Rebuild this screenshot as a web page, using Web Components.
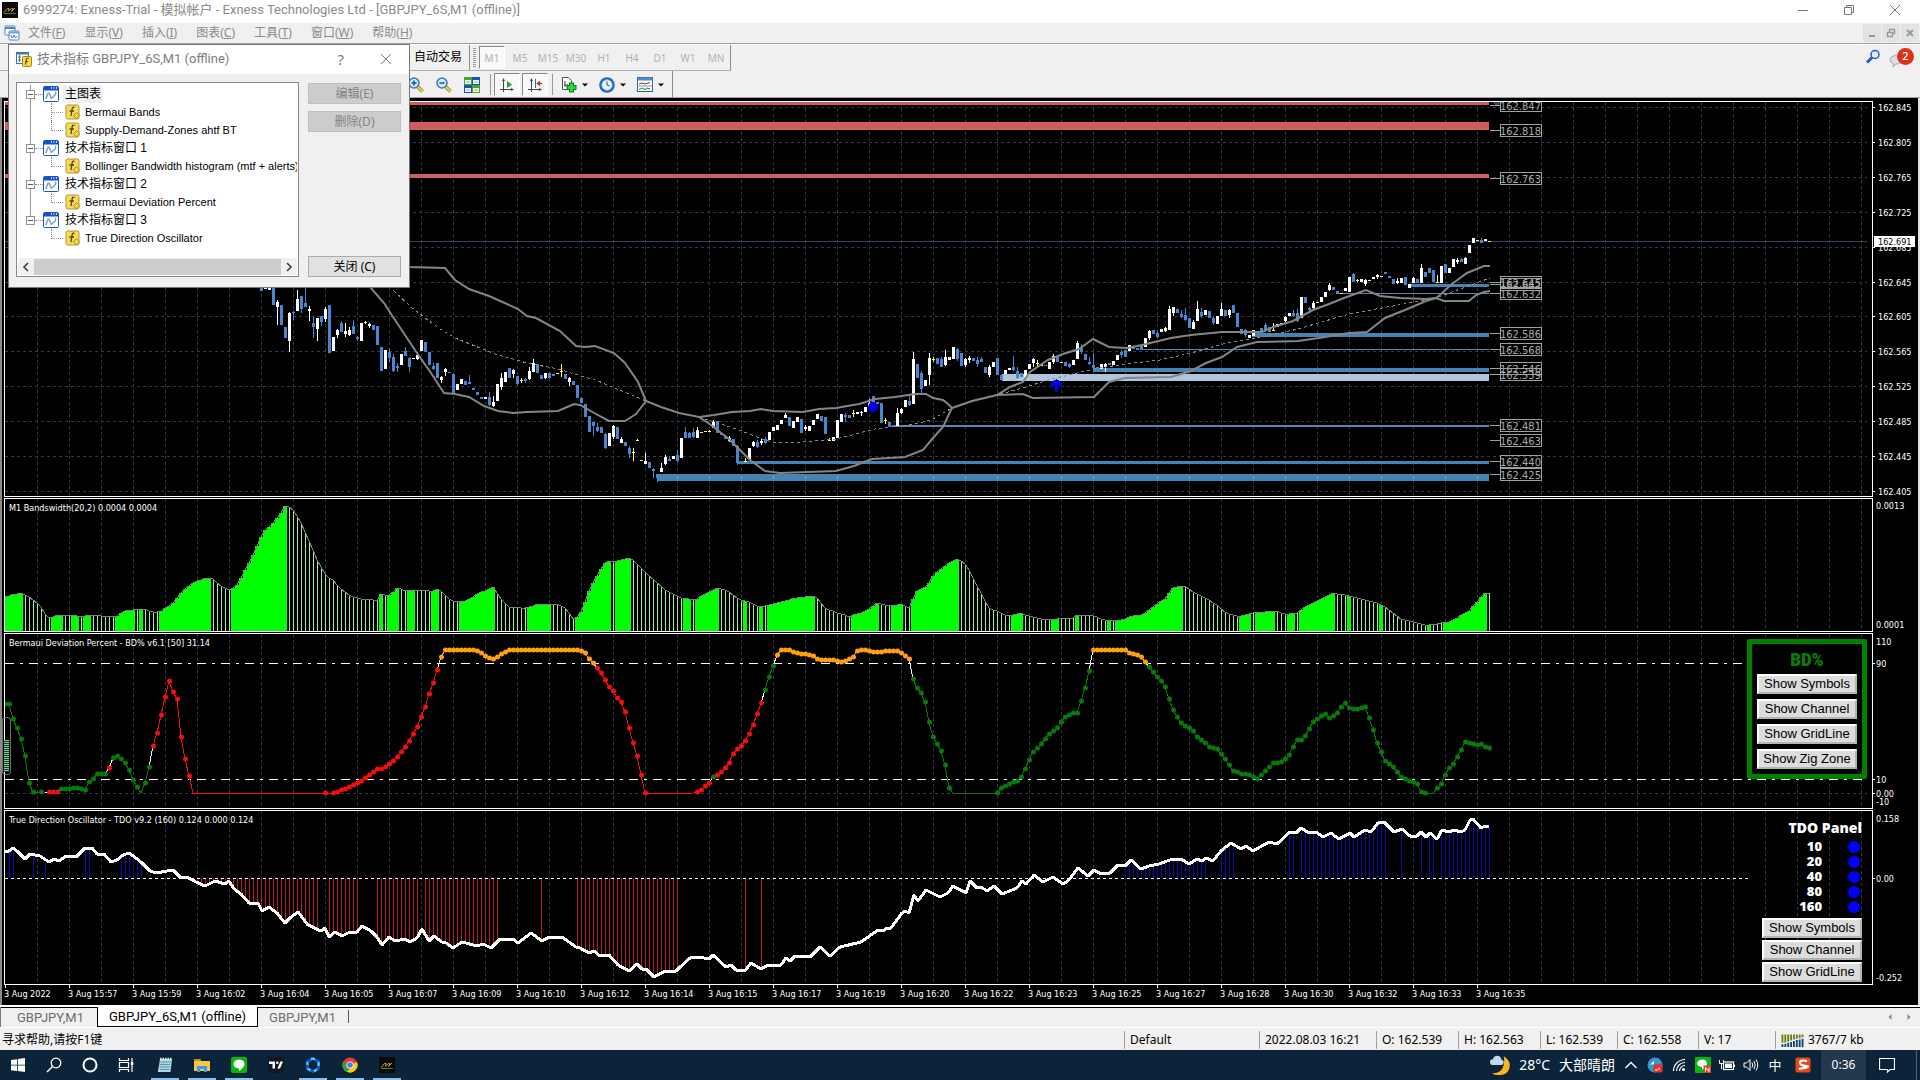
<!DOCTYPE html>
<html lang="zh-CN">
<head>
<meta charset="utf-8">
<title>6999274: Exness-Trial</title>
<style>
html,body{margin:0;height:100%;overflow:hidden;background:#f0f0f0}
body{font:12px/16px "Noto Sans","Noto Sans CJK SC",sans-serif;color:#000}
</style>
</head>
<body>
<mt-terminal></mt-terminal>
<script>
function define(name, css, html, ready) {
  const tpl = document.createElement('template');
  tpl.innerHTML = `<style>:host{box-sizing:border-box;display:block}*{box-sizing:border-box}
  button{font:inherit;color:inherit;background:none;border:0;padding:0;margin:0;white-space:nowrap}${css}</style>${html}`;
  customElements.define(name, class extends HTMLElement {
    connectedCallback() {
      if (this.shadowRoot) return;
      this.attachShadow({ mode: 'open' }).appendChild(tpl.content.cloneNode(true));
      if (ready) ready(this, this.shadowRoot);
    }
  });
}

/* ---------- icons ---------- */
const mtLogo = '<rect width="16" height="16" fill="#0b0b0b"/><path d="M2 10.500 5.500 6.500h1.500L6.500 9l3-2.500h1.500L9.500 9.500l3.500-3.500" fill="none" stroke="#c99c2c" stroke-width="1"/><path d="M2 11.500h12" stroke="#4c7b33"/>';
const lens = '<path d="m10 10 4.500 4.500" stroke="#9a7416" stroke-width="3.500"/><path d="m10 10 4.500 4.500" stroke="#f0d14a" stroke-width="2"/><circle cx="6" cy="6" r="5" fill="#c9e8fb" stroke="#3b78b5" stroke-width="1.500"/><path d="M3.500 6h5" stroke="#1d4f91" stroke-width="1.500"/>';
const arrows = '<path d="M4.500 2v13M1 12.500h13" stroke="#444"/><path d="M4.500 1 3 4h3zM15 12.500 12 11v3z" fill="#444"/>';
const ICONS = {
  mt: mtLogo,
  charts: '<rect x="1" y="1" width="10" height="9" rx="1" fill="#fff" stroke="#4a8ac4"/><path d="M1 3h10" stroke="#4a8ac4" stroke-width="2"/><rect x="5" y="6" width="10" height="9" rx="1" fill="#fff" stroke="#4a8ac4"/><path d="M5 7.500h10" stroke="#6ba4d8" stroke-width="2"/><path d="m6.500 10 2 3 1.500-3 1.500 3 2-2" fill="none" stroke="#3b6fb0"/>',
  dlg: '<rect x=".5" y="1.500" width="12" height="11" fill="#fff" stroke="#3c78a8"/><path d="M.5 2.500h12" stroke="#3c78a8" stroke-width="2"/><path d="M3.500 4v7M2 6h3M2 9h3" stroke="#3c78a8"/><rect x="6.500" y="5.500" width="9" height="10" rx="1" fill="#f6d64a" stroke="#a98512"/><path d="M12.500 7.500q-2-1-2.200 1.500L9.500 13.500M9 10.500h3" fill="none" stroke="#6b4a00" stroke-width="1.200"/>',
  win: '<rect x=".5" y=".5" width="15" height="15" rx="1" fill="#fff" stroke="#1a56c4"/><path d="M1 2.500h14" stroke="#1550c8" stroke-width="4"/><path d="M8 2h1M10.500 2h1M13 2h1" stroke="#fff" stroke-width="1.500"/><path d="M3 13q2-8 3.500-5t1.500 4 3-2 1-4" fill="none" stroke="#7c9cd8" stroke-width="1.500"/>',
  fx: '<rect x="1" y="1" width="13" height="14" rx="1.500" fill="#f3d95e" stroke="#b8962a"/><path d="M9.500 3.500Q7.300 2.500 7 5.500L6 12M4.500 7h4.500" fill="none" stroke="#5d4300" stroke-width="1.300"/><path d="m11.500 8.500 3 3.200-3 3.200-3-3.200z" fill="#f8dc4c" stroke="#a98512"/>',
  zoomin: lens + '<path d="M6 3.500v5" stroke="#1d4f91" stroke-width="1.500"/>',
  zoomout: lens,
  tiles: '<path d="M0 0h8v8H0z" fill="#4aa324"/><path d="M8 0h8v8H8z" fill="#1c50b8"/><path d="M0 8h8v8H0z" fill="#1c50b8"/><path d="M8 8h8v8H8z" fill="#4aa324"/><path d="M1 3h6v4H1zM9 3h6v4H9zM1 11h6v4H1zM9 11h6v4H9z" fill="#eef4ea"/><path d="M2 5h4M10 5h4M2 13h4M10 13h4" stroke="#9ab0c4"/>',
  scroll: arrows + '<path d="m8 4 5 3.500-5 3.500z" fill="#1fa32b"/>',
  shift: arrows + '<path d="M8.500 2v9" stroke="#2b6cae"/><path d="M15 6.500h-4m2-2-2.500 2 2.500 2" fill="none" stroke="#b8341d" stroke-width="1.500"/>',
  newchart: '<path d="M1.500 .5h6l3 3v9h-9z" fill="#fff" stroke="#555"/><path d="M4 4v6M3 8h4" stroke="#444"/><path d="M10.500 5.500v10M5.500 10.500h10" stroke="#0c7d16" stroke-width="5"/><path d="M10.500 6.500v8M6.500 10.500h8" stroke="#2cd636" stroke-width="3"/>',
  clock: '<circle cx="8" cy="8" r="7.800" fill="#1f69bb"/><circle cx="8" cy="8" r="5.200" fill="#edf6fd" stroke="#8fc2ee"/><path d="M8 4.500V8l2.500 1" fill="none" stroke="#444"/>',
  template: '<rect x=".5" y=".5" width="15" height="14" fill="#fff" stroke="#33679a"/><path d="M.5 2h15" stroke="#4b8cc6" stroke-width="3"/><path d="M.5 9h15" stroke="#7797b5"/><path d="m2 7 3-1 3 1 5-1.500" fill="none" stroke="#9b2222"/><path d="m2 12.500 3-1.500 3 1.500 2-1.500 3 1" fill="none" stroke="#1d8a2a"/>',
  find: '<circle cx="10" cy="5.500" r="4" fill="#e3eeff" stroke="#2c56c9" stroke-width="1.500"/><path d="m7 8.500-5 5" stroke="#2c56c9" stroke-width="3"/>',
  bubble: '<path d="M7 3q6 0 6 4.500T7 12l-3 3 .5-3.500Q1 10.500 1 7.500T7 3z" fill="#dedee4" stroke="#a8a8b0"/>',
  start: '<path d="M1 3 7 2.200V7.700H1zM7.800 2.100 15 1v6.700H7.800zM1 8.500h6V14l-6-.8zM7.800 8.500H15V15l-7.200-1z" fill="#fff"/>',
  search: '<circle cx="10" cy="6" r="4.800" fill="none" stroke="#fff" stroke-width="1.300"/><path d="M6.500 9.500 1 15" stroke="#fff" stroke-width="1.500"/>',
  ring: '<circle cx="8" cy="8" r="6.500" fill="none" stroke="#fff" stroke-width="2"/>',
  tasks: '<path d="M1.500 1v2.500h9V1M1.500 15v-2.500h9V15M1.500 5.500h9v5h-9zM14 1v14" fill="none" stroke="#fff" stroke-width="1.200"/><path d="M12.800 5h2.500v3h-2.500z" fill="#fff"/>',
  notepad: '<path d="M3 2h12l-1.500 13H1z" fill="#a9d6e2"/><path d="M3.500 5h10M3 7.500h10M3 10h10M2.500 12.500h10" stroke="#5b9aab"/><path d="M3 2h12" stroke="#e7eef0" stroke-width="2.500" stroke-dasharray="1.500 1"/><path d="m1 15 1-4 1 4z" fill="#e8dcae"/>',
  folder: '<path d="M0 2h6l1 2h9v10H0z" fill="#f5c64a"/><path d="M0 2h6l1 2H0z" fill="#c98f16"/><path d="M3 15V9h10v6h-3v-3H6v3z" fill="#3b9be0"/>',
  line: '<rect width="16" height="16" rx="2" fill="#05b80b"/><path d="M8 2.500q5.500.3 5.500 4.700Q13.500 10 8 14v-2.600Q2.500 11 2.500 7.200 2.500 2.800 8 2.500z" fill="#fff"/>',
  tv: '<rect width="16" height="16" fill="#131722"/><path d="M1 4.500h6v7H4.500V7H1zM12.500 4.500H15l-3 7H9.300z" fill="#fff"/><circle cx="9.300" cy="5.800" r="1.300" fill="#fff"/>',
  star: '<path d="m8 1.500 5.600 3.200v6.600L8 14.500l-5.600-3.200V4.700z" fill="none" stroke="#1d50c8" stroke-width="3"/><path d="M6 1.800 10 1.800M13.600 5v4M12 12.500 9 14.300M5.500 13.500 2.500 11.500M2.400 8V5" stroke="#39d4f0" stroke-width="2.200"/>',
  chrome: '<circle cx="8" cy="8" r="7.500" fill="#e23f33"/><path d="M1.500 4.200 6 12l-1 3A7.500 7.500 0 0 1 1.500 4.200z" fill="#2ba24c"/><path d="M4.500 14.600 8.500 8l6.500-3A7.500 7.500 0 0 1 4.500 14.600z" fill="#fbc816"/><path d="M1.500 4.200 5 11l3 1-3.500 2.700A7.500 7.500 0 0 1 1.500 4.200z" fill="#2ba24c"/><circle cx="8" cy="8" r="3.600" fill="#fff"/><circle cx="8" cy="8" r="2.800" fill="#3f7fe8"/>',
  moon: '<path d="M11 1q6 3.500 4.500 9.500T6 16q-3 0-4-1.500 6 0 8-4T11 1z" fill="#fbb41d"/><path d="M3 8Q0 8 0 5.700T2.300 3.500Q3 .5 5.800.5T9 3.500q2 .4 2 2.300T9 8z" fill="#c3d7f0"/>',
  up: '<path d="m2.500 11 5.500-5.500 5.500 5.500" fill="none" stroke="#fff" stroke-width="1.300"/>',
  cloud: '<circle cx="8" cy="8" r="7.500" fill="#2e9bd6"/><path d="M3 7.500 7 4v3h3z" fill="#fff"/><rect x="6.500" y="7" width="9" height="8.500" rx="1.500" fill="#e2332d"/><path d="M8 13h2.500M12 10.500v2.500" stroke="#fff"/>',
  wifi: '<path d="M2.500 14A11.500 11.500 0 0 1 14 2.500M5.500 14A8.500 8.500 0 0 1 14 5.500M8.500 14A5.500 5.500 0 0 1 14 8.500" fill="none" stroke="#fff" stroke-width="1.200"/><circle cx="12.500" cy="12.500" r="1.500" fill="#fff"/>',
  battery: '<rect x="4.500" y="5" width="10" height="7.500" fill="none" stroke="#fff" stroke-width="1.200"/><path d="M6 6.500h7V11H6zM14.500 7.500H16V10h-1.500z" fill="#fff"/><path d="M2.500 12V7M.5 3v3.500h4V3" fill="none" stroke="#fff"/>',
  speaker: '<path d="M1 6h2.500L7 2.500v11L3.500 10H1z" fill="none" stroke="#fff"/><path d="M9 5.500q1.500 2.500 0 5M11 4q2.500 4 0 8M13 2.500q3.500 5.500 0 11" fill="none" stroke="#fff"/>',
  linen: '<rect width="16" height="16" rx="1" fill="#05b80b"/><path d="M7 2.500q5 .3 5 4.200T7 12.500v-2.600Q2 9.500 2 6.500t5-4z" fill="#fff"/><rect x="8.500" y="8.500" width="7.500" height="7.500" fill="#e23b30"/><path d="M10.500 14.500v-4l3.500 4v-4" fill="none" stroke="#fff"/>',
  sogou: '<rect x=".5" y=".5" width="15" height="15" rx="2" fill="#e8481c"/><path d="M12 4Q5 2.500 5 5.500T11 9 4 12" fill="none" stroke="#fff" stroke-width="2.200"/>',
  note: '<path d="M.5 1.500h15v11H11L8.500 15v-2.500H.5z" fill="none" stroke="#fff" stroke-width="1.200"/>',
  net: '<path d="M1 1.500v9M3 1.500v8.500M5 1.500v7.500M7 1.500v6.500M9 1.500v5.500M11 1.500v4.500M13 1.500v4M15 1.500v3" stroke="#6c7f10" stroke-width="1.300"/><path d="M1 12v3M3 11.500v3.500M5 10.500v4.500M7 9.500v5.500M9 8.500v6.500M11 7.500v7.500M13 7v8M15 6v9" stroke="#0d4a72" stroke-width="1.300"/>',
  min: '<path d="M3 8.500h10" stroke="#777"/>',
  restore: '<path d="M3.500 5.500h7v7h-7zM5.500 5.500v-2h7v7h-2" fill="none" stroke="#777"/>',
  close: '<path d="m3 3 10 10M13 3 3 13" stroke="#777"/>',
  mdimin: '<path d="M5 11h6" stroke="#8b9bad" stroke-width="2"/>',
  mdirestore: '<path d="M4.500 7.500h5v4h-5zM6.500 7V4.500h5v4H10" fill="none" stroke="#8b9bad" stroke-width="1.300"/>',
  mdiclose: '<path d="m5 5 6 6M11 5l-6 6" stroke="#8b9bad" stroke-width="2"/>',
  caret: '<path d="M5 6.500h6L8 9.500z" fill="#000"/>',
  left: '<path d="M9.500 5v6L6.500 8z" fill="#888"/>',
  right: '<path d="M6.500 5v6l3-3z" fill="#888"/>',
  chevl: '<path d="M10 4 6 8l4 4" fill="none" stroke="#444" stroke-width="1.700"/>',
  chevr: '<path d="m6 4 4 4-4 4" fill="none" stroke="#444" stroke-width="1.700"/>'
};
define('ui-icon', ':host{width:var(--size,16px);height:var(--size,16px);flex:none}svg{display:block;width:100%;height:100%}', '<svg viewBox="0 0 16 16" aria-hidden="true"></svg>',
  (el, root) => {
    const svg = root.querySelector('svg'), name = el.getAttribute('name');
    if (name === 'net') svg.setAttribute('preserveAspectRatio', 'none');
    svg.innerHTML = ICONS[name];
  });

/* ---------- title and menu ---------- */
const WINDOW_FONT = '13px/16px Roboto,"Noto Sans CJK SC",sans-serif';
define('title-bar', `
:host{display:flex;align-items:center;height:23px;background:#fff;color:#8b8b8b;padding:0 17px 3px 2px;gap:5px}
h1{flex:1;font:${WINDOW_FONT};margin:0;white-space:nowrap}
nav{display:flex;gap:30px;align-items:center}`,
`<ui-icon name="mt"></ui-icon><h1>6999274: Exness-Trial - 模拟帐户 - Exness Technologies Ltd - [GBPJPY_6S,M1 (offline)]</h1>
<nav><button aria-label="Minimize"><ui-icon name="min"></ui-icon></button><button aria-label="Restore"><ui-icon name="restore"></ui-icon></button><button aria-label="Close"><ui-icon name="close"></ui-icon></button></nav>`);

define('menu-bar', `
:host{display:flex;align-items:center;height:21px;color:#8b8b8b;padding:0 1px 0 4px;border-bottom:1px solid #a0a0a0;background:#f0f0f0}
nav{display:flex;gap:19px;flex:1;padding-left:8px}
div{display:flex;gap:1px}div button{width:18px;height:18px;background:#e3e3e3;padding:1px}`,
`<ui-icon name="charts"></ui-icon><nav><button>文件(<u>F</u>)</button><button>显示(<u>V</u>)</button><button>插入(<u>I</u>)</button><button>图表(<u>C</u>)</button><button>工具(<u>T</u>)</button><button>窗口(<u>W</u>)</button><button>帮助(<u>H</u>)</button></nav>
<div><button aria-label="Minimize chart"><ui-icon name="mdimin"></ui-icon></button><button aria-label="Restore chart"><ui-icon name="mdirestore"></ui-icon></button><button aria-label="Close chart"><ui-icon name="mdiclose"></ui-icon></button></div>`);

/* ---------- toolbars ---------- */
define('tool-bars', `
:host{display:flex;justify-content:space-between;height:54px;background:#f0f0f0;border-bottom:1px solid #a0a0a0;border-top:1px solid #fff}
.bars{display:flex;flex-direction:column;align-items:flex-start}
.bar{display:flex;align-items:center;height:26px;padding:0 0 0 414px;border-right:1px solid #8c8c8c;border-bottom:1px solid #b0b0b0}
.auto{width:56px;height:25px;border-right:1px solid #8c8c8c;text-align:left;padding-bottom:2px}
.grip{width:3px;height:20px;margin:0 3px;background:repeating-linear-gradient(#999 0 1px,#f0f0f0 1px 2px)}
.tf{width:28px;color:#b0b0b0;font-size:10px;text-align:center}
.on{width:26px;height:23px;background:#f9f9f9;border:1px solid #fff;border-top-color:#888;border-left-color:#888;color:#b0b0b0}
.tf.on{margin-right:1px}
.two{padding:1px 3px 0 408px;border-bottom:0}
.zoom{display:flex;gap:12px;margin-right:10px}
.toggles{display:flex;gap:2px;margin:0 4px 0 3px}
.toggles .on{padding:3px 4px}
.sep{width:1px;height:21px;background:#999}
.menus{display:flex;gap:6px;margin-left:8px}
.drop{display:flex;align-items:center}
.right{display:flex;gap:8px;padding:4px 13px 0 0;align-items:flex-start}
.msg{position:relative;width:18px;padding-top:3px}
b{position:absolute;left:8px;top:-1px;width:17px;height:17px;border-radius:9px;background:#dc3318;color:#fff;font:600 11px/16px "Open Sans",sans-serif;text-align:center}`,
`<div class="bars"><div class="bar"><button class="auto">自动交易</button><span class="grip"></span><button class="tf on">M1</button><button class="tf">M5</button><button class="tf">M15</button><button class="tf">M30</button><button class="tf">H1</button><button class="tf">H4</button><button class="tf">D1</button><button class="tf">W1</button><button class="tf">MN</button></div>
<div class="bar two"><div class="zoom"><button aria-label="Zoom in"><ui-icon name="zoomin"></ui-icon></button><button aria-label="Zoom out"><ui-icon name="zoomout"></ui-icon></button><button aria-label="Tile"><ui-icon name="tiles"></ui-icon></button></div><span class="sep"></span><div class="toggles"><button class="on" aria-label="Auto scroll"><ui-icon name="scroll"></ui-icon></button><button class="on" aria-label="Shift"><ui-icon name="shift"></ui-icon></button></div><span class="sep"></span><div class="menus"><button class="drop" aria-label="Indicators"><ui-icon name="newchart"></ui-icon><ui-icon name="caret"></ui-icon></button><button class="drop" aria-label="Periods"><ui-icon name="clock"></ui-icon><ui-icon name="caret"></ui-icon></button><button class="drop" aria-label="Templates"><ui-icon name="template"></ui-icon><ui-icon name="caret"></ui-icon></button></div></div></div>
<div class="right"><button aria-label="Search"><ui-icon name="find"></ui-icon></button><button class="msg"><ui-icon name="bubble"></ui-icon><b>2</b></button></div>`);

/* ---------- indicator dialog ---------- */
define('tree-row', `
:host{display:flex;align-items:center;height:18px;padding-left:8px;gap:6px;white-space:nowrap;background:linear-gradient(#999,#999) 12px 0/1px 100% no-repeat}
:host([last]){background-size:1px 9px}
:host([end]){background:none}
span{flex:none}
.box{width:9px;height:9px;border:1px solid #919191;background:linear-gradient(#3a56a8,#3a56a8) 50% 50%/5px 1px no-repeat #fff}
.dots{width:8px;border-top:1px dotted #888;margin-left:-6px}
.elbow{width:13px;height:18px;margin-left:25px;border-left:1px dotted #888;background:linear-gradient(90deg,#999 50%,#fff 50%) 0 9px/2px 1px repeat-x}
.elbow.cut{height:10px;align-self:flex-start}
.win{margin-left:-6px}
.fx{margin-left:-5px;margin-right:-2px}`, '<slot></slot>', (el, root) => {
  const child = el.hasAttribute('child');
  const lead = document.createElement('template');
  lead.innerHTML = child
    ? `<span class="elbow${el.getAttribute('child') === 'cut' ? ' cut' : ''}"></span><ui-icon class="fx" name="fx"></ui-icon>`
    : '<span class="box"></span><span class="dots"></span><ui-icon class="win" name="win"></ui-icon>';
  root.querySelector('slot').before(lead.content);
});
define('indicator-dialog', `
:host{width:402px;background:#f0f0f0;border:1px solid #777;color:#000}
header{display:flex;align-items:center;height:29px;background:#fff;color:#7d7d7d;padding:0 15px 2px 7px;gap:5px}
h2{font:${WINDOW_FONT};margin:0;flex:1}
.q{font-size:15px;margin-right:29px}
.body{display:flex;gap:9px;padding:8px 7px 10px}
.list{width:283px;height:195px;border:1px solid #828790;background:#fff;display:flex;flex-direction:column;padding:2px 1px 1px}
.tree{flex:1;overflow:hidden;font:11px/18px "Liberation Sans","Noto Sans CJK SC",sans-serif}
.tree .zh{font-size:12px}
.sel{background:#f0f0f0;padding:0 2px;margin:0 -2px}
.scroll{display:flex;align-items:center;height:17px;background:#f0f0f0;justify-content:space-between}
.thumb{flex:1;height:16px;background:#cdcdcd}
.side{display:flex;flex-direction:column;gap:7px;width:93px;padding-top:1px}
.side button{height:21px;border:1px solid #adadad;background:#e1e1e1}
.side button:disabled{background:#ccc;border-color:#bfbfbf;color:#838383}
.side button:last-child{margin-top:auto}`,
`<header><ui-icon name="dlg"></ui-icon><h2>技术指标 GBPJPY_6S,M1 (offline)</h2><button class="q" aria-label="Help">?</button><button aria-label="Close"><ui-icon name="close"></ui-icon></button></header>
<div class="body"><div class="list"><div class="tree">
<tree-row class="zh"><span class="sel">主图表</span></tree-row><tree-row child>Bermaui Bands</tree-row><tree-row child="cut">Supply-Demand-Zones ahtf BT</tree-row>
<tree-row class="zh">技术指标窗口 1</tree-row><tree-row child="cut">Bollinger Bandwidth histogram (mtf + alerts)</tree-row>
<tree-row class="zh">技术指标窗口 2</tree-row><tree-row child="cut">Bermaui Deviation Percent</tree-row>
<tree-row class="zh" last>技术指标窗口 3</tree-row><tree-row child="cut" end>True Direction Oscillator</tree-row></div>
<div class="scroll"><ui-icon name="chevl"></ui-icon><span class="thumb"></span><ui-icon name="chevr"></ui-icon></div></div>
<div class="side"><button disabled>编辑(E)</button><button disabled>删除(D)</button><button>关闭 (C)</button></div></div>`);

/* ---------- chart data ---------- */
const BAR = 4, FIRST = 5, LAST = 1489;
const GRID = '#2e3a4c';
/* survey(x origin, y origin, units per pixel, flat x/y list): points in plot pixels */
const survey = (ox, oy, k, text) => {
  const n = text.trim().split(/[\s,]+/).map(Number), out = [];
  for (let i = 0; i < n.length; i += 2) out.push([ox + n[i] / k, oy + n[i + 1] / 3]);
  return out;
};
const valueAt = (pts, x) => {
  if (x <= pts[0][0]) return pts[0][1];
  for (let i = 1; i < pts.length; i++) if (x <= pts[i][0]) {
    const [a, b] = pts[i - 1], [c, d] = pts[i];
    return c === a ? d : b + (d - b) * (x - a) / (c - a);
  }
  return pts[pts.length - 1][1];
};
const inside = (ranges, x, slack) => ranges.some(r => x >= r[0] - slack && x <= r[1] + slack);
const spans = (ox, k, text) => text.trim().split(/\s+/).map(s => s.split('-').map(v => ox + v / k));

/* colour, body top, body bottom, wick top, wick bottom; third-pixels from y 270 */
const CANDLES_A = `b45,62 w50,58 w50,60 b50,104 w95,112,90,165 b105,165 b170,205 w128,212,126,246 b125,130,122,150 w88,124,60,124
b78,118,78,130 b100,110,50,112 w117,123,108,152 b158,170,140,203 w145,178,145,212 b138,155,138,168 w117,147,110,155 b105,248 w202,242 w180,195,178,203
b160,187,152,187 w183,192,160,200 w180,195,170,197 b168,193,150,193 b202,206,198,212 w160,212 y156,158,153,163 w162,168,158,175 b165,180 b168,224
b232,302 w240,298 b247,265,235,275 b262,302,252,305 b288,295,280,305 w252,285 b242,257,232,258 b265,290,262,305 w263,267 w255,268,245,270
w210,242 b217,245 b247,285 b287,298,280,300 b278,325 w320,330,318,338 w297,305,293,317 b305,310 b312,370 w343,360
w328,342 b333,345 b335,342,315,343 b355,360 b367,374 b382,388 w382,386 b380,405,367,408 w395,408,378,410 w343,392
w325,352,310,360 w305,335 b295,323 w300,313,298,325 b318,342,318,346 y330,332,325,338 b328,333,325,340 w303,327,290,330 w278,305,267,305 b283,308
b315,328 w310,323,308,327 b310,323 b313,318 y309,311 y302,304,282,320 b312,328 w325,337,322,348 b333,345 b345,383
b383,398 b403,440 b438,486 b457,468,455,497 b470,482,460,486 b472,490 b493,533,490,537 w490,528 w467,500,465,508 b472,507
w508,518,502,519 b517,528 b535,552,528,563 y545,547,533,572 y510,513,507,513 y570,572 w572,583,548,583 b575,593 b597,602,595,623 b613,625,613,635
w593,605,578,607 w562,583,555,585 b567,572,558,574 w558,567 b555,572,540,575 w505,563 b487,503,472,505 b490,503,487,504 b485,500,473,503 w480,503,470,503
y486,488 y483,485 y484,486,480,487 w455,473,450,475 b452,490 b488,495 b497,508 w503,512,498,516 b508,527 b527,580,525,585
b575,580 y572,574,565,576 w533,570 w515,528,512,532 b517,530,510,535 w513,520,505,525 b508,518,500,523 w485,510 w472,483 w465,480
w450,463 w435,443,428,445 b440,468 w452,475 w440,455 b448,490 w470,478,465,483 w467,483 w450,465 w433,447
b437,452 b442,492 y510,512,505,514 w500,512 w450,505 w433,455 b435,442,430,455 b435,445 y430,432,420,440 w427,433
w425,430,422,437 w410,425 w398,412,388,413 b378,400 b395,402 b400,458 y450,452,443,462 b455,470 b466,472 w430,468,415,470
w418,430,413,433 w390,410 b392,405,378,408 w268,403,245,403 b282,325 b310,358,302,368 w330,348 w263,315,250,345 y268,270,262,275 b265,282
b268,290,262,290 w262,285,240,287 w262,270 w230,268 b237,268,235,272 b250,288 w268,285,265,290 w263,270,258,280 b265,272 b270,283,262,290
b267,275,262,275 b290,308 w292,315,285,322 w275,292 b265,315 b315,330 w300,312 w293,300 b290,300,258,303 b302,325,290,327
b308,320 w300,320 w282,297 w268,278,265,292 y280,282,270,288 w283,288 b285,289 w275,298 w258,275,252,283 b262,275
y275,277 b275,287 b283,292,278,293 w270,285 w220,268,213,268 b235,245,222,252 b252,270 b275,283,262,285 b285,293,248,293 b290,298
w283,298 w283,290,278,307 b280,285 w272,285 w255,270 b247,255,240,263 b240,260 w225,243 b228,238 b235,240
b225,240 w203,230 w183,205,180,210 b180,193 b190,200,180,203 w178,185 w175,183,170,185 w118,180,108,180 w110,128,110,137 b118,128
b133,140,120,143 b135,150,115,152 b145,173 w155,177,150,177 w118,152,93,153 b127,137,115,143 w120,135 b122,145 b145,160,140,165 w138,163
w117,138,100,138 b120,138 w120,135,117,145 b105,130 b130,170,128,172 b177,192 b180,195,177,202 w195,205 w180,198 w182,190
b175,188 b165,180,160,185 b170,187 y180,182,158,183`;
/* same layout, third-pixels from y 90 */
const CANDLES_B = `w703,710 w700,706 w680,693,677,697 w670,678 b670,678,660,680 b668,693,657,696 w620,683 b620,640 b653,660,650,667
w640,655,632,657 y637,639 w622,636 w605,620 w585,600,580,602 b590,600 b603,612 y610,612 w595,603 w560,605
b552,575,548,577 y569,571,566,577 w568,575 w570,582,567,587 y571,573 w560,566 w556,560,552,566 y559,561 b547,552 b557,565
b568,583 w573,580,565,582 w565,578 b560,585 w582,593 w565,578,560,580 b568,580 w535,578,522,578 b545,560 b535,550
b540,575 y577,579,555,579 w528,580 b523,550 w535,548 w507,530 w510,515,505,522 b507,515,503,517 w503,522,500,522 w465,490
w445,458 y451,453 b449,458,445,458 w448,453 y454,456`;
const candles = (() => {
  const read = (text, y0) => text.trim().split(/\s+/).map(t => {
    const v = t.slice(1).split(',').map(n => Math.round(y0 + n / 3));
    return [t[0], v[0], v[1], v[2] ?? v[0], v[3] ?? v[1]];
  });
  return [...read(CANDLES_A, 270), ...read(CANDLES_B, 90)];
})();

const P = s => s.trim().split(/\s+/).map(p => p.split(',').map(Number));
const UPPER = P(`380,262 409,267 445,268 455,280 469,289 489,296 518,309 527,316 536,318 560,331 576,346 585,347 595,346 614,353 625,363 638,382 646,401 661,407 679,413 699,417 714,415 732,412 750,411 761,409 773,411 803,412 819,409 836,408 859,404 875,399 895,397 915,394 926,394 933,398 943,400 948,404 952,408 972,401 997,395 1010,387 1023,382 1030,372 1048,360 1063,354 1079,349 1093,339 1109,347 1127,348 1142,345 1171,338 1191,335 1222,332 1262,332 1273,327 1293,321 1313,310 1329,304 1344,298 1366,290 1380,296 1400,298 1426,299 1436,298 1440,295 1452,284 1467,273 1484,266 1490,266`);
const LOWER_A = P(`360,270 370,287 384,303 397,323 417,353 431,373 444,393 455,394 469,397 484,406 498,411 513,413 527,412 558,411 574,404 580,405 596,414 609,421 625,421 636,414 646,401`);
const LOWER_B = P(`699,417 711,425 729,439 750,460 765,471 780,473 836,471 854,466 872,459 905,457 923,450 933,438 943,427 950,412 952,408`);
const LOWER_C = P(`997,395 1023,394 1033,398 1094,397 1109,382 1117,380 1125,378 1171,377 1191,371 1206,363 1222,357 1237,347 1257,342 1298,341 1319,338 1349,333 1367,332 1385,318 1405,310 1426,301 1436,298 1444,301 1469,301 1476,295 1484,292 1490,291`);
const MIDDLE = [P(`385,282 393,290 411,307 437,327 455,338 495,354 527,363 558,369 598,381 646,401`), P(`699,417 742,431 762,439 773,442 803,442 836,439 875,429 915,424 931,420 952,408`), P(`1000,394 1023,388 1048,380 1094,369 1125,364 1160,360 1191,353 1227,343 1267,336 1298,329 1349,314 1426,300 1436,298 1490,278`)];

const WIDTH = [
  ...survey(0, 270, 2.24, `10,982 28,973 50,970 70,985 90,1008 100,1030 112,1047 125,1034 150,1034 180,1039 210,1034 235,1038 260,1039 275,1025 300,1018 320,1015 345,1027 360,1022 385,1003 405,968 430,940 460,925 475,925 495,948 515,962 532,945 545,908 562,870 575,830 590,785 605,768 625,738 640,706 652,713 670,745 690,805 710,870 730,918 745,928 765,960 795,985 830,988 847,995 853,972 870,978 890,952 908,962 940,958 965,965 982,955 995,972 1010,993 1045,992 1075,968 1105,952 1120,985 1140,1010 1180,1015 1200,1003 1250,1003 1268,1017 1287,1052 1305,1018 1320,960 1340,910 1358,872 1380,875 1412,862 1430,885 1460,925 1490,960 1520,982`),
  ...survey(640, 270, 1.96, `90,985 108,990 130,970 150,955 170,960 195,988 215,998 235,1010 260,1003 300,985 342,976 365,1018 410,1040 440,1025 465,1000 480,1006 515,1003 528,1015 540,965 562,950 575,915 600,885 620,865 640,885 660,945 685,1018 705,1025 720,1040 748,1030 775,1045 805,1048 820,1045 850,1045 858,1033 890,1037 910,1050 945,1050 960,1040 985,1033 1010,1005 1030,985 1042,955 1065,945 1085,968 1110,985 1130,1005 1150,1030 1175,1040 1200,1028 1245,1022 1265,1032 1290,1028 1300,1012 1330,990 1358,970 1385,975 1410,985 1440,997 1460,1012 1490,1045 1520,1057 1540,1066 1560,1062`),
  [1448, 622], [1460, 616], [1470, 610], [1480, 598], [1485, 593], [1489, 593]];
const RISING = [...spans(0, 2.24, '10-52 113-142 158-178 187-205 262-303 312-321 356-475 517-644 849-857 866-893 908-930 965-985 1028-1112 1180-1234 1287-1368 1377-1414 1530-1545'),
  ...spans(640, 1.96, '108-155 200-210 233-238 248-343 412-467 490-515 530-625 727-751 805-820 857-860 914-922 930-1065 1173-1197 1205-1245 1267-1283 1291-1362 1386-1394 1447-1455 1540-1552'), [1445, 1486]];

const PERCENT = [
  ...survey(0, 630, 2.24, `12,222 20,222 28,265 37,290 46,322 55,370 64,455 75,490 82,490 91,487 100,490 109,487 127,487 136,478 154,478 163,475 172,475 181,478 190,482 199,455 208,448 217,433 235,431 244,415 253,385 261,377 270,385 279,395 288,418 297,448 306,470 316,490 324,463 333,415 342,350 351,313 360,260 369,203 378,151 387,185 396,200 405,317 414,385 423,437 432,490 746,490 755,487 764,481 773,476 782,470 800,460 809,454 818,445 827,436 836,424 845,418 854,418 863,410 872,400 881,391 890,380 899,365 908,349 917,331 925,313 934,290 943,260 952,230 960,197 969,163 978,125 987,83 996,59 1050,59 1068,62 1077,70 1086,78 1095,85 1104,88 1113,80 1122,72 1131,65 1140,59 1292,59 1301,63 1310,68 1319,85 1328,98 1337,115 1346,128 1355,151 1364,170 1373,182 1382,203 1391,217 1400,247 1409,293 1418,338 1426,373 1436,436 1444,490 1555,490`),
  ...survey(680, 630, 1.8667, `25,490 32,485 40,478 47,467 54,458 61,442 69,436 77,425 84,415 92,397 99,373 107,357 114,348 122,331 129,311 137,284 144,251 152,215 158,182 166,143 173,110 181,75 188,59 197,59 205,62 220,70 245,76 260,91 285,90 300,95 310,92 323,80 332,60 345,59 355,65 380,65 395,61 410,65 420,78 428,87 434,143 442,172 449,187 457,212 464,271 472,320 479,341 487,362 494,400 502,473 510,490 591,490 599,475 606,468 614,461 628,453 636,442 643,422 651,391 658,368 673,343 688,313 703,296 718,262 733,248 741,250 748,217 755,182 763,128 770,59 830,59 838,68 860,80 868,95 875,110 882,125 897,152 905,170 912,205 920,238 927,260 935,280 957,302 965,320 987,350 1002,355 1017,385 1032,422 1047,431 1060,433 1077,446 1090,428 1105,400 1120,398 1136,377 1150,331 1158,332 1166,320 1180,278 1203,250 1211,263 1222,258 1240,217 1250,235 1265,238 1278,227 1285,260 1293,298 1300,335 1315,391 1330,410 1345,440 1360,452 1375,458 1383,485 1390,490 1405,490 1412,475 1420,465 1427,437 1435,415 1442,406 1450,383 1458,360 1465,337 1480,341 1487,346 1495,341 1502,352 1510,355`)];
const PERCENT_COLOUR = [[46, 'g'], [59, 'r'], [107, 'g'], [111, 'r'], [151, 'g'], [438, 'r'], [595, 'o'], [710, 'r'], [714, 'g'], [763, 'r'], [775, 'g'], [911, 'o'], [1091, 'g'], [1147, 'o'], [1500, 'g']];

const TREND = [
  ...survey(0, 630, 2.24, `12,667 20,664 30,654 40,665 55,688 68,672 90,678 110,695 120,688 132,693 148,677 170,680 190,653 205,655 218,672 232,673 248,697 262,690 275,675 290,670 305,685 318,700 335,724 350,728 388,720 405,745 418,740 440,757 460,767 482,754 505,762 514,752 525,778 540,793 558,820 578,820 587,843 602,832 620,850 638,880 650,865 668,847 690,885 720,903 729,893 738,922 750,905 765,917 783,905 800,907 812,887 830,903 845,920 855,945 872,922 885,933 908,927 918,937 935,925 946,898 962,932 972,918 990,935 1000,938 1015,953 1035,935 1068,948 1083,942 1100,955 1120,928 1135,930 1150,926 1160,938 1190,908 1213,933 1230,922 1258,922 1290,950 1300,955 1320,970 1330,963 1345,978 1365,975 1385,1005 1408,1023 1427,1003 1437,1018 1447,1017 1465,1040 1490,1022 1515,1022`),
  ...survey(680, 630, 1.8667, `0,1010 18,985 35,980 55,988 62,975 85,1010 95,1005 105,1020 122,1024 132,998 152,1018 165,1006 188,1006 197,985 205,993 215,978 243,980 262,952 280,978 298,950 337,935 370,900 380,903 385,893 393,895 415,850 420,843 428,850 436,795 445,812 460,780 485,800 500,790 510,767 533,790 541,753 555,775 562,770 573,782 587,768 602,792 630,775 638,753 645,763 660,735 678,755 697,742 715,763 725,753 743,715 762,738 773,720 785,732 803,728 818,705 830,707 841,690 860,718 875,707 895,703 915,690 935,687 950,702 965,688 975,693 982,685 995,692 1010,662 1028,638 1048,658 1056,647 1070,662 1100,635 1115,643 1138,605 1150,608 1160,593 1175,610 1188,605 1200,620 1215,610 1230,627 1250,608 1258,620 1278,600 1290,605 1303,580 1315,577 1333,605 1347,598 1363,617 1375,618 1383,607 1392,622 1400,610 1413,627 1422,600 1435,607 1445,600 1458,607 1465,600 1475,570 1480,568 1495,593 1503,587 1510,590`)];
const UP_BARS = [...spans(0, 2.24, '20-30 74-74 102-102 190-201 272-318'), ...spans(680, 1.8667, '743-743 755-755 830-983 1007-1033 1138-1147 1160-1318 1347-1347 1383-1383 1398-1408 1421-1512')];
const DOWN_BARS = [...spans(0, 2.24, '443-505 522-713 738-801 845-937 950-1116 1213-1213 1292-1520'), ...spans(680, 1.8667, '122-122 152-152')];

const path = (pts, attrs) => `<path d="M${pts.map(p => p.map(Math.round).join(' ')).join('L')}" fill="none" ${attrs}/>`;
const hline = (y, colour, dash = '3 3', x2 = '100%') => `<line x1="5" x2="${x2}" y1="${y}.5" y2="${y}.5" stroke="${colour}" stroke-dasharray="${dash}"/>`;
function verticals(top, bottom) {
  let s = '';
  for (let x = 37; x < 4000; x += 32) s += `M${x}.5 ${top}V${bottom}`;
  return `<path d="${s}" stroke="${GRID}" stroke-dasharray="3 3"/>`;
}
const rect = (x, y, w, h, c) => `<rect x="${x}" y="${y}" width="${w}" height="${h}" fill="${c}"/>`;

const PLOTS = {
  price() {
    let s = verticals(102, 496) + [107, 142, 177, 212, 247, 282, 316, 351, 386, 421, 456, 491].map(y => hline(y, GRID)).join('') + hline(241, '#33465a', 'none');
    const red = '#cd5c5c', blue = '#4682b4';
    [[5, 102, 3, red], [5, 122, 8, red], [5, 174, 4, red], [1409, 284, 3, blue], [1339, 293, 1, '#5f87b5'], [1252, 333, 4, blue], [1142, 349, 1, '#5f87b5'], [1093, 368, 4, blue], [1002, 374, 7, '#b0c4de'], [895, 425, 2, '#5f82b0'], [738, 461, 3, blue], [657, 474, 7, blue]]
      .forEach(([x, y, h, c]) => { s += rect(x, y, LAST - x, h, c); });
    for (let x = 677; x < LAST; x += 32) s += rect(x, 476, 1, 3, '#62b4cf') + (x > 1002 ? rect(x, 377, 1, 3, '#a4dfb0') : '');
    const hue = { b: '#4a86cf', w: '#fff', y: '#ffff40' };
    candles.forEach(([c, t, b, wt, wb], i) => {
      const x = 261 + i * BAR;
      s += rect(x, wt, 1, Math.max(1, wb - wt), hue[c]) + rect(x - 1, t, 3, Math.max(1, b - t), hue[c]);
    });
    const band = 'stroke="#858585" stroke-width="2" shape-rendering="auto"';
    s += [UPPER, LOWER_A, LOWER_B, LOWER_C].map(p => path(p, band)).join('') + MIDDLE.map(p => path(p, 'stroke="#8a8a8a" stroke-dasharray="3 3"')).join('');
    s += '<ellipse cx="873" cy="407" rx="5" ry="5" fill="#0000f0" shape-rendering="auto"/><path d="M1056.500 379 1051 383v4h3v-2h1v7h3v-7h1v2h3v-4z" fill="#0000e8"/><path d="M1492 102h10l-5 4z" fill="#33465a"/>';
    [[847, 105], [818, 130], [763, 178], [645, 282], [642, 284], [632, 293], [586, 333], [568, 349], [546, 368], [539, 374], [481, 425], [463, 440], [440, 461], [425, 474]].forEach(([n, y]) => {
      s += `<path d="M1490 ${y}.5h10m0-6h41v12h-41z" fill="none" stroke="#a0a0a0"/><text x="1520.500" y="${y + 5}" text-anchor="middle" class="tag">162.${n}</text>`;
    });
    return s;
  },
  width() {
    let s = verticals(499, 631), bars = '', thin = '';
    const top = [];
    for (let x = FIRST; x <= LAST; x += BAR) {
      const y = Math.round(valueAt(WIDTH, x));
      top.push([x, y]);
      if (inside(RISING, x, 0.3)) bars += `M${x - 2} ${y}h4V631h-4z`;
      else thin += `M${x}.5 ${y}V631`;
    }
    return s + `<path d="${thin}" stroke="#a5eba5"/><path d="${bars}" fill="#0f0"/>` + path(top, 'stroke="#808080"');
  },
  percent() {
    let s = verticals(634, 808) + hline(793, GRID) + hline(663, '#fff', '9 6 3 6') + hline(779, '#fff', '9 6 3 6'), dots = '';
    const hue = { g: '#0a780a', r: '#f01010', o: '#ffa010' };
    let prev;
    for (let x = FIRST; x <= LAST; x += BAR) {
      const y = Math.round(valueAt(PERCENT, x));
      const c = PERCENT_COLOUR.find(r => x <= r[0])[1];
      if (prev) s += `<path d="M${x - BAR} ${prev[0]}L${x} ${y}" stroke="${prev[1] === c ? hue[c] : '#fff'}"/>`;
      if (y < 793 || [325, 333, 645, 997, 1425].includes(x)) dots += `<circle cx="${x}.5" cy="${y}" r="2.500" fill="${hue[c]}"/>`;
      prev = [y, c];
    }
    return s + `<g shape-rendering="auto">${dots}</g>`;
  },
  trend() {
    let s = verticals(811, 984), up = '', down = '';
    for (let x = FIRST; x <= LAST; x += BAR) {
      const y = Math.round(valueAt(TREND, x));
      if (inside(UP_BARS, x, 1.5)) up += `M${x}.5 ${y}V878`;
      if (inside(DOWN_BARS, x, 1.5)) down += `M${x}.5 ${y}V878`;
    }
    return s + `<path d="${up}" stroke="#0c0ca8"/><path d="${down}" stroke="#b82020"/>` + hline(878, '#fff', '3 3', 1748) + path(TREND, 'stroke="#fff" stroke-width="3" stroke-linejoin="round"');
  }
};
const SCALES = {
  price: [[107, '162.845'], [142, '162.805'], [177, '162.765'], [212, '162.725'], [247, '162.685'], [282, '162.645'], [316, '162.605'], [351, '162.565'], [386, '162.525'], [421, '162.485'], [456, '162.445'], [491, '162.405']],
  width: [[505, '0.0013'], [624, '0.0001']],
  percent: [[641, '110'], [663, '90'], [779, '10'], [793, '0.00'], [801, '-10']],
  trend: [[818, '0.158'], [878, '0.00'], [977, '-0.252']]
};
define('chart-pane', `
:host{display:flex;min-height:0;flex:var(--share) 1 0}
.plot{flex:1;min-width:0;border:1px solid #fff;position:relative;overflow:hidden}
.plot svg,.axis{display:block;width:100%;height:100%}
.axis{width:45px;flex:none}
svg{shape-rendering:crispEdges}
text{font:9px "DejaVu Sans Condensed","DejaVu Sans",sans-serif;fill:#fff}
.tag{font-size:11px;fill:#a9a9a9}
.cap{position:absolute;left:4px;top:2px;font:9px/14px "DejaVu Sans Condensed","DejaVu Sans",sans-serif;color:#fff;white-space:nowrap}
::slotted(*){position:absolute;right:var(--right,5px);top:var(--top,5px)}`,
`<div class="plot"><svg></svg><div class="cap"></div><slot></slot></div><svg class="axis"></svg>`, (el, root) => {
  const kind = el.getAttribute('kind'), top = +el.getAttribute('top');
  const [plot, axis] = root.querySelectorAll('svg');
  root.querySelector('.cap').textContent = el.getAttribute('caption') || '';
  plot.innerHTML = `<g transform="translate(-5 ${-top - 1})">${PLOTS[kind]()}</g>`;
  const x = kind === 'price' ? 5 : 3;
  let s = SCALES[kind].map(([y, t]) => (kind === 'price' || /^(90|10|0\.00)$/.test(t) ? `<path d="M0 ${y}.5h2" stroke="#fff"/>` : '') + `<text x="${x}" y="${y + 4}">${t}</text>`).join('');
  if (kind === 'price') s += `<rect x="1" y="236" width="41" height="11" fill="#fff"/><text x="5" y="245" style="fill:#000">162.691</text>`;
  axis.innerHTML = `<g transform="translate(0 ${-top})">${s}</g>`;
});

const BEVEL = 'button{height:20px;width:100px;background:#dcdcdc;border:2px solid;border-color:#fff #b4b4b4 #b4b4b4 #fff;font:13px/16px "Liberation Sans",Arial,sans-serif;color:#000}';
define('percent-panel', `
:host{display:flex;flex-direction:column;align-items:center;gap:5px;width:120px;padding:5px 5px 5px;border:5px solid #008000;border-radius:2px;background:#000}
h3{margin:0;height:20px;font:900 19px/22px "Roboto Condensed",Roboto,"Liberation Sans",sans-serif;color:#0a7a0a}
${BEVEL}`, '<h3>BD%</h3><button>Show Symbols</button><button>Show Channel</button><button>Show GridLine</button><button>Show Zig Zone</button>');
define('trend-panel', `
:host{display:flex;flex-direction:column;align-items:flex-end;gap:2px;color:#fff;font:800 13px/15px "Open Sans","DejaVu Sans",sans-serif}
h3{font:inherit;font-size:14px;margin:0;height:17px}
dl{margin:0 0 2px}
dl div{display:flex;align-items:center;justify-content:flex-end;gap:26px;height:15px;padding-right:2px}
dd{margin:0;width:12px;height:12px;border-radius:6px;background:#00f}
${BEVEL}`, `<h3>TDO Panel</h3><dl>${[10, 20, 40, 80, 160].map(n => `<div><dt>${n}</dt><dd></dd></div>`).join('')}</dl><button>Show Symbols</button><button>Show Channel</button><button>Show GridLine</button>`);
define('level-gauge', ':host{width:9px;height:58px;border:1px solid #6e6e6e;border-radius:3px;padding:22px 1px 2px}div{height:100%;background:repeating-linear-gradient(#7ccf98 0 1px,#10401c 1px 2px)}', '<div></div>');

define('time-axis', `
:host{display:flex;height:20px;overflow:hidden;color:#fff;font:9px/14px "DejaVu Sans Condensed","DejaVu Sans",sans-serif}
span{flex:0 0 64px;white-space:nowrap;padding-top:2px;background:linear-gradient(#fff,#fff) 1px 0/1px 3px no-repeat}`,
  '2022 15:57 15:59 16:02 16:04 16:05 16:07 16:09 16:10 16:12 16:14 16:15 16:17 16:19 16:20 16:22 16:23 16:25 16:27 16:28 16:30 16:32 16:33 16:35'.split(' ').map(t => `<span>3 Aug ${t}</span>`).join(''));

define('chart-window', `
:host{display:flex;flex-direction:column;gap:1px;min-height:0;background:#000;border-left:2px solid #8a8a8a;border-right:2px solid #e3e3e3;padding:3px 0 0 2px;position:relative}
time-axis{margin-top:-1px}
level-gauge{position:absolute;left:0;bottom:230px}`,
`<chart-pane kind="price" top="101" style="--share:396"></chart-pane>
<chart-pane kind="width" top="498" style="--share:134" caption="M1 Bandswidth(20,2) 0.0004 0.0004"></chart-pane>
<chart-pane kind="percent" top="633" style="--share:176;--right:5px" caption="Bermaui Deviation Percent - BD% v6.1 [50] 31.14"><percent-panel></percent-panel></chart-pane>
<chart-pane kind="trend" top="810" style="--share:175;--right:10px;--top:9px" caption="True Direction Oscillator - TDO v9.2 (160) 0.124 0.000 0.124"><trend-panel></trend-panel></chart-pane>
<time-axis></time-axis><level-gauge></level-gauge>`);

/* ---------- bottom bars ---------- */
define('tab-strip', `
:host{display:flex;align-items:stretch;height:23px;border-top:2px solid #fff;border-bottom:1px solid #fff;background:#f0f0f0;color:#6d6d6d;font:${WINDOW_FONT}}
nav{display:flex;flex:1;box-shadow:inset 0 1px #000}
button{padding:1px 13px 0 16px;border-left:1px solid #777}
.on{background:#fff;color:#000;border:1px solid #000;border-top:0;padding:1px 11px 0}
.last{border:0;padding:1px 12px 0 11px}
.end{width:1px;background:#555;margin:3px 0 4px}
div{display:flex;align-items:center;gap:3px;padding-right:3px;box-shadow:inset 0 1px #000}`,
`<nav><button>GBPJPY,M1</button><button class="on">GBPJPY_6S,M1 (offline)</button><button class="last">GBPJPY,M1</button><span class="end"></span></nav><div><ui-icon name="left"></ui-icon><ui-icon name="right"></ui-icon></div>`);

define('status-bar', `
:host{display:flex;align-items:center;height:22px;background:#f0f0f0;padding-top:2px}
.help{flex:1;padding-left:2px}
.c{height:18px;line-height:18px;border-left:1px solid #a0a0a0;padding-left:5px;white-space:nowrap;display:flex;gap:4px;align-items:center}
ui-icon{--size:23px;height:15px}`,
`<span class="help">寻求帮助,请按F1键</span><span class="c" style="width:135px">Default</span><span class="c" style="width:117px">2022.08.03 16:21</span><span class="c" style="width:82px">O: 162.539</span><span class="c" style="width:82px">H: 162.563</span><span class="c" style="width:77px">L: 162.539</span><span class="c" style="width:81px">C: 162.558</span><span class="c" style="width:77px">V: 17</span><span class="c" style="width:145px"><ui-icon name="net"></ui-icon>3767/7 kb</span>`);

define('task-bar', `
:host{display:flex;align-items:stretch;height:30px;background:#0c2439;color:#fff}
.apps{display:flex;flex:1}
.apps button{display:flex;align-items:center;justify-content:center;width:36px}
.apps .app{width:37px}
.pins{display:flex;margin-left:2px}
.run{background:linear-gradient(#8fbfe8,#8fbfe8) 50% 100%/28px 2px no-repeat}
.tray{display:flex;align-items:center;gap:8px}
.w{display:flex;align-items:center;gap:9px;font-size:14px}
.w ui-icon{--size:20px}
.ime{font-size:13px;width:16px;text-align:center}
.clock{align-self:stretch;width:45px;background:#22384c;display:flex;align-items:center;justify-content:center;margin-left:2px}
.end{display:flex;align-items:center;padding:0 21px 0 5px;height:100%;border-right:1px solid #4f6375;margin-right:3px}`,
`<div class="apps"><button aria-label="Start"><ui-icon name="start"></ui-icon></button><button aria-label="Search"><ui-icon name="search"></ui-icon></button><button aria-label="Cortana"><ui-icon name="ring"></ui-icon></button><button aria-label="Task view"><ui-icon name="tasks"></ui-icon></button><div class="pins">
${['notepad', 'folder', 'line', 'tv', 'star', 'chrome', 'mt'].map(n => `<button class="app${n === 'tv' ? '' : ' run'}" aria-label="${n}"><ui-icon name="${n}"></ui-icon></button>`).join('')}</div></div>
<div class="tray"><button class="w"><ui-icon name="moon"></ui-icon><span>28°C</span><span>大部晴朗</span></button><ui-icon name="up"></ui-icon><ui-icon name="cloud"></ui-icon><ui-icon name="wifi"></ui-icon><ui-icon name="linen"></ui-icon><ui-icon name="battery"></ui-icon><ui-icon name="speaker"></ui-icon><span class="ime">中</span><ui-icon name="sogou" style="margin-left:4px"></ui-icon><button class="clock">0:36</button><button class="end" aria-label="Notifications"><ui-icon name="note"></ui-icon></button></div>`);

define('mt-terminal', `
:host{display:flex;flex-direction:column;height:100vh;position:relative}
chart-window{flex:1}
indicator-dialog{position:absolute;left:8px;top:44px;z-index:2}`,
`<title-bar></title-bar><menu-bar></menu-bar><tool-bars></tool-bars><chart-window></chart-window><tab-strip></tab-strip><status-bar></status-bar><task-bar></task-bar><indicator-dialog></indicator-dialog>`);
</script>
</body>
</html>
